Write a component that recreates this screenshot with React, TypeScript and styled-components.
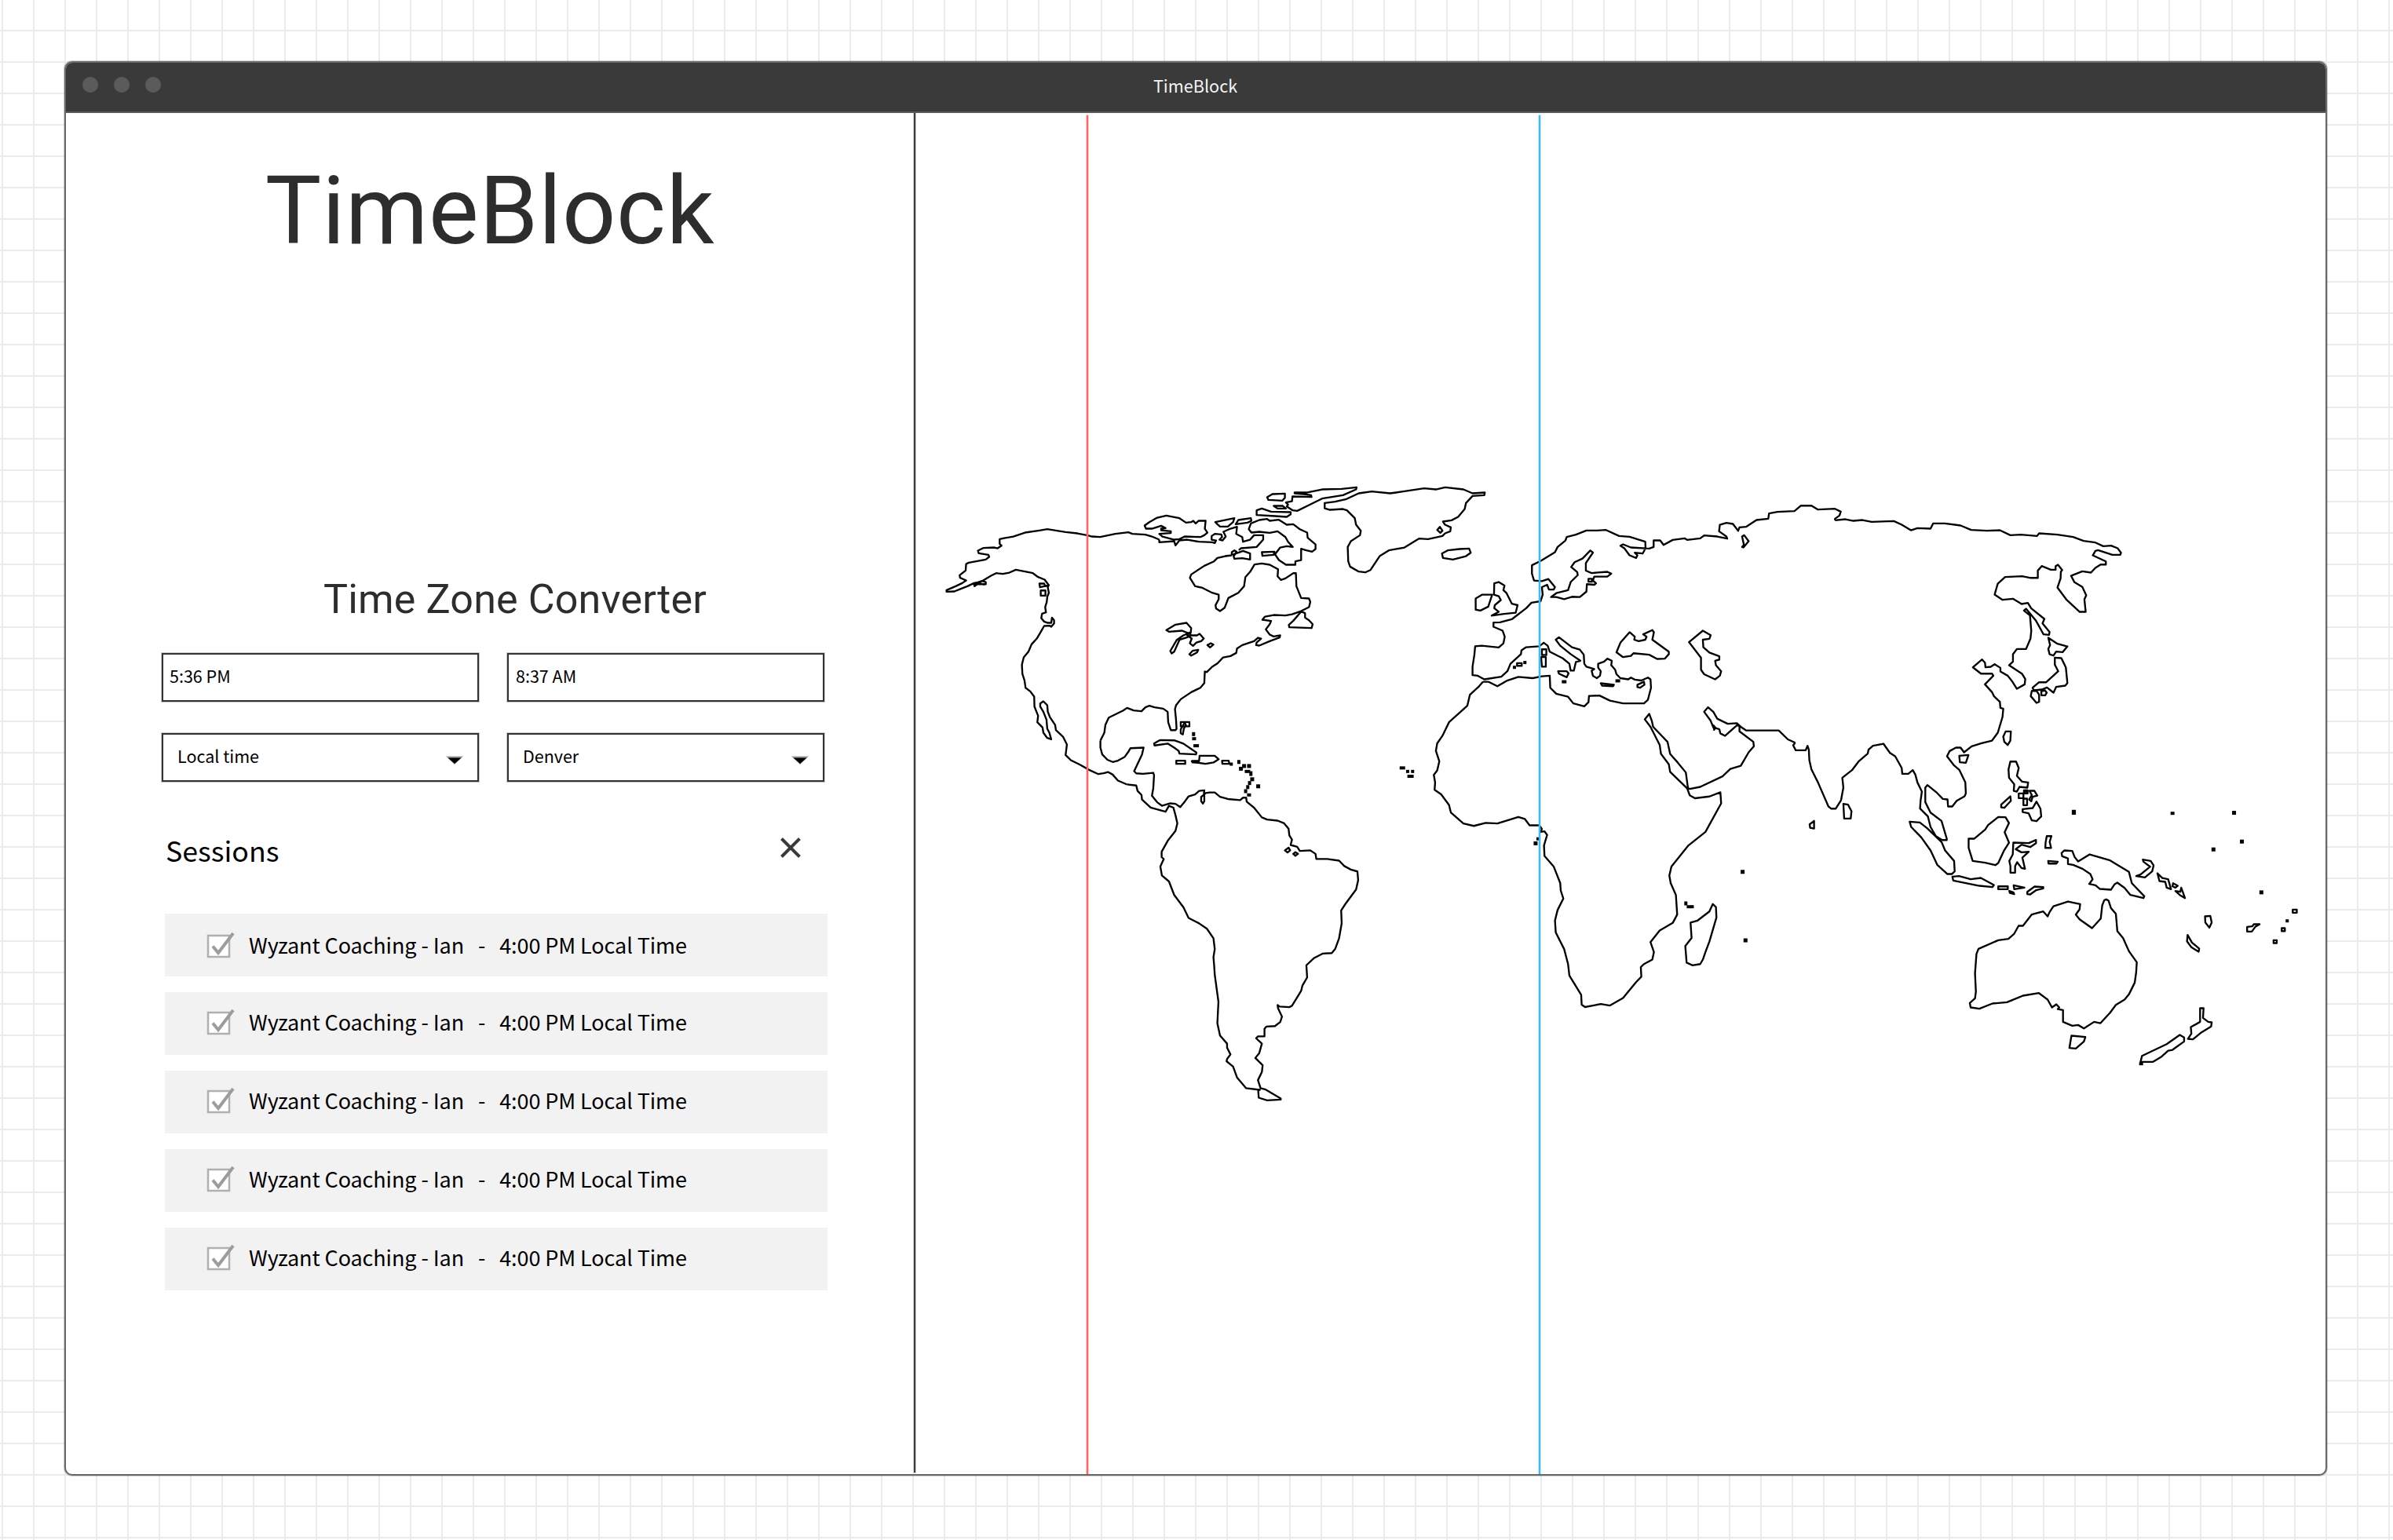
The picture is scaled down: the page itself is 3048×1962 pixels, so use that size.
import React from 'react';
import styled, { createGlobalStyle } from 'styled-components';

const ui = '"Noto Sans CJK SC", "Open Sans", sans-serif';
const display = 'Roboto, "Liberation Sans", sans-serif';

const GlobalStyle = createGlobalStyle`
  *, *::before, *::after { box-sizing: border-box; }
  body { margin: 0; background: #fff; }
`;

const Canvas = styled.div`
  width: 3048px;
  height: 1962px;
  padding: 78px 0 0 82px;
  overflow: hidden;
  background-color: #fff;
  background-image:
    linear-gradient(to right, #ececec 2px, transparent 2px),
    linear-gradient(to bottom, #ececec 2px, transparent 2px);
  background-size: 40px 40px;
  background-position: 2px 0, 0 38px;
`;

const Window = styled.div`
  display: flex;
  flex-direction: column;
  width: 2882px;
  height: 1802px;
  border: 2px solid #696969;
  border-radius: 10px;
  box-shadow: 0 0 0 1px rgba(60, 60, 60, 0.25);
  background: #fff;
  overflow: hidden;
`;

const TitleBar = styled.header`
  display: grid;
  grid-template-columns: 1fr auto 1fr;
  align-items: center;
  flex: none;
  height: 66px;
  margin: -2px -2px 0;
  padding: 0 24px 0 23px;
  background: #3a3a3a;
  border-bottom: 2px solid #5c5c5c;
`;

const Lights = styled.div`
  display: flex;
  gap: 20px;
  padding-bottom: 5px;
`;

const Light = styled.span`
  width: 20px;
  height: 20px;
  border-radius: 50%;
  background: #5b5b5b;
`;

const WindowName = styled.span`
  padding-bottom: 3px;
  font: 400 21.6px/30px ${ui};
  color: #f4f4f4;
`;

const Body = styled.div`
  display: flex;
  flex: 1;
  min-height: 0;
`;

const Sidebar = styled.aside`
  width: 1080px;
  flex: none;
  padding: 55px 114px 0 122px;
`;

const Brand = styled.h1`
  margin: 0 -114px 0 -122px;
  text-align: center;
  font: 400 120px/140px ${display};
  letter-spacing: 0.75px;
  color: #2d2d2d;
`;

const ConverterTitle = styled.h2`
  margin: 395px 0 0;
  padding-left: 56px;
  text-align: center;
  white-space: nowrap;
  font: 400 52px/60px ${display};
  letter-spacing: 0.15px;
  color: #2d2d2d;
`;

const Fields = styled.div`
  display: grid;
  grid-template-columns: 404px 404px;
  grid-auto-rows: 62px;
  gap: 40px 36px;
  margin-top: 38px;
`;

const Field = styled.div<{ $inset: number }>`
  display: flex;
  align-items: center;
  justify-content: space-between;
  padding: 0 18px 5px ${(p) => p.$inset}px;
  border: 2px solid #333;
  box-shadow: 0 0 0 1px rgba(60, 60, 60, 0.28);
  font: 400 21.5px/30px ${ui};
  color: #000;
`;

const Caret = styled.svg`
  width: 22px;
  height: 11px;
  margin-top: 11px;
`;

const SessionsHeader = styled.div`
  display: flex;
  align-items: center;
  justify-content: space-between;
  height: 50px;
  margin-top: 62px;
  padding: 0 30px 0 5px;
`;

const SessionsTitle = styled.h3`
  margin: 0;
  font: 400 35.7px/50px ${ui};
  color: #000;
`;

const CloseIcon = styled.svg`
  width: 26px;
  height: 26px;
  margin-bottom: 7px;
`;

const SessionList = styled.ul`
  display: flex;
  flex-direction: column;
  gap: 20px;
  margin: 56px -4px 0 4px;
  padding: 0;
  list-style: none;
`;

const Session = styled.li`
  display: flex;
  align-items: center;
  gap: 15px;
  height: 80px;
  padding: 0 0 4px 52px;
  background: #f2f2f2;
  font: 400 27px/40px ${ui};
  letter-spacing: -0.08px;
  color: #000;
  white-space: pre;

  &:first-child { padding-bottom: 0; }
`;

const Checkbox = styled.svg`
  width: 40px;
  height: 36px;
  margin-top: 2px;
  flex: none;
`;

const Divider = styled.div`
  width: 2px;
  height: 1732px;
  flex: none;
  background: #3e3e3e;
  box-shadow: 0 0 0 1px rgba(60, 60, 60, 0.25);
`;

const MapPane = styled.main`
  position: relative;
  flex: 1;
`;

const MapDrawing = styled.svg`
  display: block;
  width: 1796px;
  height: 1734px;
`;

const Meridian = styled.div<{ $x: number; $color: string; $edge: string }>`
  position: absolute;
  top: 3px;
  bottom: -2px;
  left: ${(p) => p.$x}px;
  width: 2px;
  background: ${(p) => p.$color};
  box-shadow: 0 0 0 1px ${(p) => p.$edge};
`;

type Sheet = {
  x: number;
  y: number;
  sx: number;
  sy: number;
  coast: string;
  /* small islets as x, y, width, height */
  islets?: number[][];
};

const T = 1 / 3;

const sheets: Sheet[] = [
  {
    // Alaska and the Pacific coast
    x: 1190, y: 600, sx: T, sy: T,
    coast:
      'M858,262 830,250 805,243 755,240 740,234 690,240 632,252 600,250 585,246 545,238 500,233 430,222 400,227 345,235 300,250 265,256 248,260 248,278 255,285 240,295 228,292 185,294 165,304 168,314 205,320 208,328 195,338 130,350 120,355 118,380 95,398 97,408 120,418 105,428 80,440 45,455 45,461 75,460 100,450 125,440 150,428 165,425 185,418 215,400 235,390 260,393 285,388 310,377 345,384 375,390 395,405 420,415 435,435 432,445 436,465 430,480 428,500 422,520 425,540 410,545 407,562 418,575 432,580 445,580 448,560 456,570 456,582 445,595 440,591 418,592 405,615 390,640 370,662 358,690 340,712 333,740 335,775 343,800 347,828 365,842 380,862 381,900 395,935 392,960 412,980 415,1000 430,1020 445,1025 438,1000 430,985 427,950 415,920 403,900 403,888 415,880 430,895 432,920 440,940 460,970 463,990 490,1015 505,1045 500,1085 520,1105 555,1122 590,1142 625,1158 645,1155 662,1150 680,1160 700,1183 735,1198' +
      'M150,432 195,432 195,424 180,420 152,440ZM160,426 190,434M400,430 418,430 422,440 436,436 402,444ZM405,456h18v20h-18Z',
  },
  {
    // Arctic Canada, Greenland and the Atlantic coast
    x: 1400, y: 600, sx: T, sy: T,
    coast:
      'M228,262 228,272 285,268 290,284 305,265 335,262 380,270 430,272 440,275 445,265 428,262 428,248 440,240 465,242 468,252 458,262 470,265 482,250 473,232 500,220 525,213 522,240 545,252 548,270 575,262 590,245 625,245 625,262 600,290 540,295 532,302M505,322 480,325 450,332 437,345 400,362 350,395 345,408 365,440 390,445 430,465 455,472 455,490 443,512 445,525 460,535 478,522 492,485 530,465 552,440 557,405 575,385 592,357 620,353 650,358 682,375 680,402 693,416 710,410 740,390 750,390 752,440 770,485 800,487 805,500 800,520 770,535 735,547 710,552 665,550 632,556 622,568 655,573 650,585 635,605 650,625 665,632 690,628 688,636 650,650 610,667 598,665 600,655 617,640 605,637 590,650 545,665 525,678 522,695 500,707 472,712 450,735 430,748 410,768 402,766 400,810 385,828 350,845 310,872 292,895 288,910 292,950 294,985 290,990 272,990 262,960 260,920 243,908 210,903 190,897 175,903 160,918 130,915 105,905 90,915 35,942 22,970 18,1000 3,1030' +
      'M172,208 190,195 220,178 255,170 305,180 330,197 350,195 358,190 367,200 378,190 405,190 402,220 412,235 400,245 385,252 325,250 305,260 285,262 240,250 228,240 272,237 272,230 235,226 235,220 252,218 235,209 200,220 177,220Z' +
      'M442,195 475,188 515,180 510,195 490,212 460,212 450,203ZM520,203 530,187 578,180 580,190 565,197Z' +
      'M570,222 578,200 610,187 640,183 650,190 685,186 715,205 740,203 765,222 793,235 795,255 825,280 825,298 812,308 790,303 770,297 770,340 748,345 748,358 712,358 685,340 670,318 690,292 715,287 738,290 720,270 710,252 680,230 650,236 610,232 580,235Z' +
      'M620,310 668,308 665,320 622,324ZM600,150 620,143 655,155 730,157 730,165 715,175 670,172 600,168ZM640,100 660,88 708,86 708,102 698,113 645,110Z' +
      'M745,82 790,82 850,70 925,68 982,62 980,70 930,92 850,105 800,130 755,152 738,150 715,135 720,128 712,120 735,115 737,97 810,99 808,92 780,88 745,85ZM665,133 700,133 712,143 680,143Z' +
      'M512,318 530,312 548,305 575,315 575,338 545,333 515,335 512,325ZM505,310 515,303 523,308 515,322 505,318Z' +
      'M255,608 290,587 332,580 350,600 348,618 340,620 315,610 265,614ZM345,618 320,628 295,645 270,688 275,697 285,690 305,645 335,635 350,622M335,628 372,628 382,622 398,640 388,650 370,655 357,668 345,658 352,640ZM343,700 355,687 377,683 372,693 350,705ZM412,665 425,658 435,663 422,674Z' +
      'M770,537 740,572 723,588 725,597 810,600 814,585 800,570 785,560 785,543Z' +
      'M860,122 900,117 940,108 990,85 1040,78 1110,85 1160,78 1240,66 1285,70 1320,62 1390,70 1425,85 1472,82 1470,92 1425,95 1400,122 1395,145 1370,175 1345,188 1312,193 1320,205 1342,215 1340,230 1320,238 1310,248 1255,260 1220,258 1165,292 1105,303 1070,325 1035,378 1015,387 990,384 957,365 950,345 948,290 960,268 995,245 998,228 980,205 975,180 945,150 930,145 880,148 860,142Z' +
      'M1290,225 1300,213 1310,228 1302,236ZM1308,315 1330,303 1375,298 1412,296 1418,312 1400,325 1350,338 1312,332Z',
  },
  {
    // Gulf of Mexico, the Caribbean and South America
    x: 1380, y: 880, sx: T, sy: 540 / 1568,
    coast:
      'M63,184 63,210 70,235 90,255 110,263 130,258 155,245 170,225 178,212 228,210 222,235 205,270 192,297 200,305 225,307 265,303 268,312 265,360 260,388 280,412 298,425 330,416 350,418 368,430 385,410 400,390 425,383 440,370 460,368 458,385 465,378 480,376 500,376 520,392 550,400 597,404 608,395 620,395 622,410 650,432 680,468 700,476 740,480 765,490 782,510 785,535 795,550 790,570 815,577 825,592 865,590 885,603 888,622 930,622 975,628 995,648 1020,661 1045,668 1048,700 1040,735 1000,787 983,812 985,860 975,915 960,955 947,970 912,972 880,988 850,1015 853,1060 835,1090 830,1110 795,1165 785,1170 748,1168 740,1162 742,1175 757,1205 750,1225 730,1240 697,1242 690,1250 690,1278 665,1278 658,1285 680,1305 670,1340 655,1358 683,1385 680,1410 665,1440 675,1470 695,1475 752,1508 752,1512 700,1515 668,1505 666,1478 672,1476 620,1470 585,1430 570,1390 545,1370 547,1362 560,1345 547,1320 547,1305 520,1275 510,1230 514,1150 500,1050 498,1020 495,985 500,955 495,915 470,880 440,860 400,840 380,800 345,755 325,705 298,683 292,650 305,622 297,615 297,595 320,555 350,518 357,490 350,460 342,432 325,425 312,447 285,440 255,432 222,402 220,385 205,370 200,350 165,346' +
      'M458,385 448,392 448,408 455,417 460,408 460,385M268,195 290,182 345,183 380,195 430,228 428,235 365,232 362,222 345,210 320,195 270,202ZM412,260 440,260 442,240 500,240 515,253 495,265 465,270 415,263ZM353,258h34v12h-34ZM528,258h25l3,12h-27ZM370,115h33v16h-33ZM385,117 370,142 370,157 378,161 382,139 390,127ZM768,590 782,580 788,590 778,598ZM800,603 808,597 818,603 808,610Z',
    islets: [
      [419, 160, 4, 5], [421, 177, 5, 4], [429, 203, 7, 4], [563, 271, 4, 4], [592, 263, 4, 5], [612, 278, 5, 5],
      [631, 278, 5, 5], [600, 288, 5, 5], [625, 298, 7, 4], [638, 306, 4, 6], [643, 327, 5, 5], [633, 341, 4, 5],
      [626, 356, 4, 5], [618, 371, 4, 5], [631, 385, 5, 4], [666, 353, 5, 5], [425, 262, 9, 4],
      [1217, 285, 7, 4], [1237, 298, 4, 4], [1256, 298, 4, 4], [1248, 316, 8, 4],
    ],
  },
  {
    // Western Europe, Africa and Arabia
    x: 1800, y: 700, sx: T, sy: 600 / 1568,
    coast:
      'M265,440 285,440 320,455 355,437 400,424 455,428 490,422 520,420 522,460 545,480 590,490 610,512 652,522 668,508 670,487 710,486 750,503 800,512 880,512 895,500 907,460 905,432 895,426 870,436 845,433 830,426 820,432 790,428 775,415 770,400 755,385 757,370 740,363 728,373 705,380 705,393 715,405 712,420 700,428 685,420 680,403 690,398 660,390 652,380 650,350 635,333 605,325 555,292 543,300 560,320 600,348 637,370 620,374 612,403 600,403 595,380 570,362 520,340 512,320 497,310 480,322 430,325 412,335 410,348 370,380 358,405 335,423 270,432 245,420 225,418 225,390 232,350 235,322 260,320 325,326 343,312 348,290 340,270 305,257 305,243 330,242 375,232 430,195 450,177 485,172 493,150 490,125 510,117 517,133 535,133 540,125 515,98 490,105 460,103 452,80 452,52 485,38' +
      'M265,440 250,455 215,483 205,520 160,555 135,575 110,620 90,645 85,670 98,705 90,735 77,750 82,775 80,800 105,815 135,850 142,875 190,912 230,920 275,910 320,912 400,890 425,897 443,918 480,918 490,930 485,940 500,938 510,950 498,985 500,1020 535,1055 560,1110 562,1135 572,1162 550,1200 540,1235 543,1275 575,1330 590,1380 595,1418 640,1482 642,1515 655,1523 715,1513 750,1518 800,1493 850,1440 870,1422 868,1390 880,1380 912,1365 918,1340 905,1307 940,1268 990,1243 1007,1215 1002,1150 982,1110 977,1085 985,1055 1050,985 1115,940 1175,845 1172,808 1130,822 1075,828 1055,818 1045,795 980,740 975,715 945,680 940,650 905,590 883,565 900,547 910,570 915,590 970,640 980,680 1010,710 1040,742 1048,793 1055,797 1095,790 1180,755 1210,730 1250,720 1280,675 1300,655 1298,640 1245,605 1245,587 1235,585 1190,620 1172,612 1168,598 1145,592 1135,570 1110,540 1125,525 1145,540 1160,563 1200,580 1235,578 1250,590 1270,602 1340,602 1395,602 1430,632 1458,643' +
      'M237,200 237,163 262,150 300,150 285,190 255,203ZM308,112 325,108 347,120 343,135 355,145 375,180 397,185 390,210 345,214 298,220 325,207 308,195 310,185 333,168 325,155 307,150Z' +
      'M525,158 545,145 590,135 600,108 627,85 625,75 602,58 615,42 645,30 675,3 685,10 658,45 658,70 680,78 740,74 755,80 740,90 690,90 685,103 697,112 690,117 662,115 660,140 635,158 605,157 575,165 545,158ZM668,97h13v10h-13Z' +
      'M775,342 790,310 825,275 845,290 843,300 860,305 885,300 890,290 877,282 912,268 918,275 912,300 975,340 975,348 960,363 930,364 900,350 840,345 830,354 800,358Z' +
      'M1052,308 1105,270 1135,285 1130,297 1105,300 1107,325 1130,343 1168,355 1168,366 1152,370 1155,385 1175,405 1170,420 1152,432 1110,415 1098,400 1098,360Z' +
      'M490,332h17v19h-17ZM487,358h18v32h-15ZM552,405 585,405 592,412 585,425 555,413ZM715,445 765,450 762,455 720,453ZM855,450 880,440 882,450 865,460 855,458ZM395,378h18v9h-18ZM1145,585 1153,593 1148,600Z' +
      'M1143,1180 1155,1190 1157,1225 1130,1305 1115,1340 1105,1365 1095,1380 1065,1384 1043,1375 1038,1320 1062,1293 1058,1242 1085,1235 1130,1205Z',
    islets: [
      [385, 392, 4, 4], [425, 376, 4, 4], [575, 440, 6, 4], [780, 437, 6, 4], [475, 963, 4, 4], [466, 978, 5, 5],
      [1257, 1073, 5, 5], [1268, 1301, 5, 5], [1040, 1178, 4, 5], [1057, 1189, 9, 4],
    ],
  },
  {
    // Scandinavia and the Barents coast
    x: 1940, y: 620, sx: T, sy: T,
    coast:
      'M65,284 120,250 130,230 160,205 165,192 200,183 240,167 280,167 315,165 365,188 405,191 465,210 466,235 455,255 425,252 435,262 430,272 405,262 385,235 370,225 380,220 410,232 480,236 497,230 497,205 522,205 535,222 570,203 615,197 625,203 675,197 690,186 740,190 778,198 775,190 747,170 750,145 775,138 800,142 820,168 825,155 850,153 890,127 935,122 938,102 970,96 1035,93 1060,72 1100,72 1125,87 1190,84 1212,95 1207,110 1190,122 1190,128M835,190 843,185 860,208 840,232 835,230 842,222Z',
  },
  {
    // Siberia, China, India and Japan
    x: 2240, y: 620, sx: T, sy: T,
    coast:
      'M290,128 330,124 360,130 395,127 430,134 515,131 545,145 580,166 605,158 655,160 665,140 710,140 770,148 810,165 870,168 920,166 960,185 1000,183 1062,188 1070,178 1140,183 1200,192 1240,207 1285,213 1315,227 1345,225 1370,235 1383,252 1380,260 1350,260 1295,242 1285,245 1275,262 1325,285 1325,297 1305,297 1285,310 1268,328 1235,323 1192,340 1205,365 1235,383 1250,415 1243,430 1248,478 1225,478 1175,432 1140,385 1152,350 1153,325 1158,318 1142,298 1133,303 1133,317 1115,317 1080,303 1065,320 1065,348 1035,348 1005,342 940,345 912,370 900,412 930,432 970,428 1003,448 1027,444 1040,465 1090,505 1083,522 1110,555 1108,566 1087,564 1058,512 1020,466 1012,473 1035,492 1040,550 1037,580 1020,620 985,620 970,640 970,668 955,682 1005,715 1017,735 1015,755 985,772 968,745 950,722 922,706 922,692 900,678 885,688 865,690 863,672 852,660 817,690 848,714 890,714 895,722 863,755 890,785 897,800 920,822 922,845 933,848 930,880 912,940 890,970 850,980 812,992 783,1015 770,997 752,997 728,1010 718,1030 745,1065 765,1082 788,1130 790,1172 785,1183 755,1200 738,1222 722,1222 720,1195 702,1193 680,1170 643,1140 635,1150 635,1205 655,1245 697,1277 717,1345 717,1350 700,1350 675,1335 655,1300 645,1260 615,1230 617,1200 622,1165 605,1130 597,1100 587,1083 570,1097 547,1097 545,1075 520,1030 500,1017 475,982 435,990 418,1005 415,1020 380,1050 355,1083 318,1112 322,1150 313,1198 293,1230 275,1230 265,1222 225,1130 200,1080 192,1045 190,1005 185,990 178,1007 140,1007 130,988 138,978' +
      'M1105,577 1140,600 1178,610 1160,632 1135,630 1125,645 1110,640 1105,620 1112,605ZM1130,653 1155,655 1172,690 1178,750 1170,760 1135,765 1125,787 1100,767 1080,775 1050,778 1045,768 1070,747 1097,747 1143,705 1130,680ZM1042,780 1060,780 1070,795 1070,822 1060,826 1038,800ZM1078,782 1092,778 1099,787 1093,797 1079,797Z' +
      'M942,935 962,935 960,970 950,987 937,975 933,955ZM765,1028 800,1025 790,1055 767,1053ZM322,1212 340,1215 353,1240 350,1268 325,1268ZM193,1290 210,1277 210,1306 195,1303Z' +
      'M960,1050 982,1050 992,1075 985,1105 1005,1127 1028,1130 1025,1150 995,1147 985,1165 973,1162 975,1137 955,1112 953,1080ZM992,1172h18v18h-18ZM1010,1192h14v25h-14ZM1012,1160h14v12h-14ZM1033,1162 1052,1162 1063,1180 1045,1185 1040,1202 1032,1195 1042,1178ZM1007,1232 1045,1228 1060,1203 1075,1230 1078,1260 1060,1278 1042,1275 1030,1248 1007,1243ZM925,1215 960,1183 962,1200 937,1227 925,1225Z',
    islets: [[1203, 1244, 5, 6]],
  },
  {
    // Indonesia, Australia and the Pacific islands
    x: 2380, y: 940, sx: 580 / 1568, sy: T,
    coast:
      'M140,320 175,323 200,345 250,398 262,430 293,470 295,510 285,520 270,520 235,485 212,430 180,380 145,340ZM287,530 310,528 350,540 385,535 430,562 425,570 380,565 290,545ZM445,567h33v11h-33ZM498,563 535,572 500,578ZM483,585 497,590 500,597 485,592ZM545,588 570,568 600,570 600,575 575,582 555,598 545,597Z' +
      'M343,385 362,385 400,350 410,333 445,302 470,303 482,325 467,360 482,400 465,430 445,478 435,486 400,477 357,470 343,420ZM497,400 550,402 575,390 575,402 555,417 525,408 505,425 525,437 550,435 528,457 537,500 525,497 510,475 503,490 503,515 487,515 487,490 483,470 495,445ZM612,375 628,375 622,397 627,420 607,420 608,400ZM617,470 650,473 645,480 618,480Z' +
      'M663,440 672,430 700,432 708,455 720,472 760,445 830,468 895,512 905,555 948,605 945,612 900,600 880,573 855,553 845,560 833,580 795,577 780,563 758,558 770,540 762,520 735,500 703,485 685,482 685,460 665,452ZM943,465 970,470 980,487 975,510 950,533 920,528 935,522 968,492 945,473ZM993,517 1010,535 1030,540 1040,578 1025,572 1020,550 1000,547ZM1047,555 1063,565 1055,572 1045,567ZM1055,585 1072,588 1075,572 1088,612 1070,600Z' +
      'M1157,682 1175,680 1180,705 1172,725 1158,705ZM1097,753 1112,782 1137,805 1135,817 1110,800 1095,777ZM1302,722 1320,720 1325,712 1345,712 1330,722 1318,740 1302,740ZM1459,656h14v12h-14ZM1421,727h11v11h-11ZM1393,773h11v11h-11Z' +
      'M817,617 825,622 833,650 850,672 855,738 875,765 895,815 922,857 920,895 915,935 895,980 880,1000 850,1020 830,1050 797,1090 775,1085 740,1110 720,1097 700,1100 668,1085 668,1040 650,1036 655,1030 645,1018 630,1030 615,1000 585,975 530,985 475,1010 425,1015 380,1035 350,1030 347,1013 365,995 368,970 365,900 370,825 377,806 445,773 480,768 500,748 515,718 530,718 560,675 600,663 615,682 622,665 635,643 685,625 727,635 725,655 712,675 725,693 768,727 798,690 803,640 810,620Z' +
      'M697,1138 745,1143 740,1160 712,1187 690,1185ZM940,1215 1025,1170 1070,1135 1085,1145 1085,1160 1045,1192 1030,1195 1005,1220 978,1238 935,1238ZM1140,1033 1152,1033 1150,1070 1168,1085 1180,1087 1178,1103 1145,1125 1115,1152 1098,1150 1110,1130 1108,1105 1140,1085Z',
    islets: [
      [705, 284, 5, 6], [1045, 288, 5, 4], [1257, 286, 5, 5], [1284, 396, 5, 5], [1186, 426, 5, 5], [1351, 590, 5, 5],
      [1440, 699, 4, 4], [937, 1245, 5, 4], [540, 203, 4, 4],
    ],
  },
];

const WorldMap = () => (
  <MapDrawing viewBox="1165.4 143.8 1796 1734" fill="none" stroke="#000" strokeWidth={2.35} strokeLinejoin="round">
    {sheets.map((s) => (
      <g key={`${s.x}-${s.y}`}>
        <path
          d={s.coast}
          transform={`translate(${s.x} ${s.y}) scale(${s.sx} ${s.sy})`}
          vectorEffect="non-scaling-stroke"
        />
        {(s.islets ?? []).map(([x, y, w, h]) => (
          <rect
            key={`${x}-${y}`}
            x={s.x + x * s.sx - w / 2}
            y={s.y + y * s.sy - h / 2}
            width={w}
            height={h}
            fill="#000"
            stroke="none"
          />
        ))}
      </g>
    ))}
  </MapDrawing>
);

const DropCaret = () => (
  <Caret viewBox="0 0 22 11">
    <path d="M0 0.5H22L11 11Z" fill="#9a9a9a" />
    <path d="M2.5 2.5H19.5L11 10Z" fill="#000" />
  </Caret>
);

const sessions = Array.from({ length: 5 }, (_, id) => ({
  id,
  label: 'Wyzant Coaching - Ian',
  time: '4:00 PM Local Time',
}));

export default function App() {
  return (
    <Canvas>
      <GlobalStyle />
      <Window>
        <TitleBar>
          <Lights>
            <Light />
            <Light />
            <Light />
          </Lights>
          <WindowName>TimeBlock</WindowName>
        </TitleBar>
        <Body>
          <Sidebar>
            <Brand>TimeBlock</Brand>
            <ConverterTitle>Time Zone Converter</ConverterTitle>
            <Fields>
              <Field $inset={8}>5:36 PM</Field>
              <Field $inset={9}>8:37 AM</Field>
              <Field $inset={18}>
                Local time
                <DropCaret />
              </Field>
              <Field $inset={18}>
                Denver
                <DropCaret />
              </Field>
            </Fields>
            <SessionsHeader>
              <SessionsTitle>Sessions</SessionsTitle>
              <CloseIcon viewBox="0 0 26 26" stroke="#3a3a3a" strokeWidth={4} strokeLinecap="butt">
                <path d="M1.5 1.5 24.5 24.5M24.5 1.5 1.5 24.5" />
              </CloseIcon>
            </SessionsHeader>
            <SessionList>
              {sessions.map((s) => (
                <Session key={s.id}>
                  <Checkbox viewBox="0 0 40 36">
                    <rect x="3" y="5" width="27" height="27" fill="#fff" stroke="#b0b0b0" strokeWidth="2.5" />
                    <path d="M9 18.5 16 27 35 2" fill="none" stroke="#9c9c9c" strokeWidth="4" />
                  </Checkbox>
                  <span>{`${s.label}   -   ${s.time}`}</span>
                </Session>
              ))}
            </SessionList>
          </Sidebar>
          <Divider />
          <MapPane>
            <WorldMap />
            <Meridian $x={218} $color="#ff6464" $edge="rgba(255, 100, 100, 0.3)" />
            <Meridian $x={794} $color="#42b8f5" $edge="rgba(66, 184, 245, 0.3)" />
          </MapPane>
        </Body>
      </Window>
    </Canvas>
  );
}
